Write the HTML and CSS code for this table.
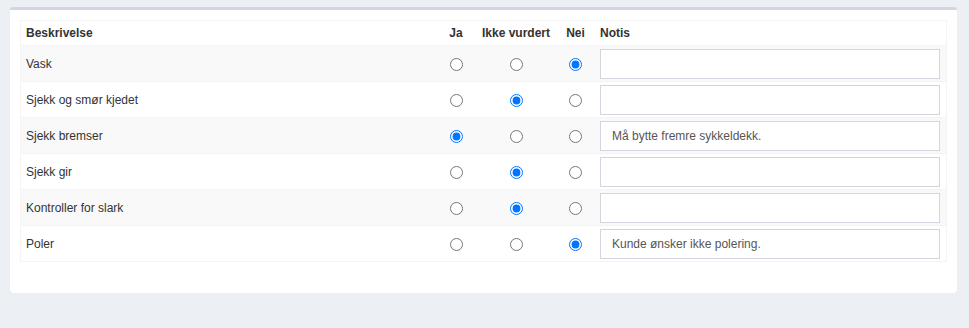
FILE: index.html
```html
<!DOCTYPE html>
<html lang="no">
<head>
  <meta charset="UTF-8">
  <meta name="viewport" content="width=device-width, initial-scale=1.0">
  <title>Sjekkliste</title>
  <link rel="stylesheet" href="styles.css">
</head>
<body>
<div class="box">
  <table class="checklist">
    <thead>
      <tr>
        <th class="col-desc">Beskrivelse</th>
        <th class="col-ja">Ja</th>
        <th class="col-ikke">Ikke vurdert</th>
        <th class="col-nei">Nei</th>
        <th class="col-notis">Notis</th>
      </tr>
    </thead>
    <tbody>
      <tr>
        <td>Vask</td>
        <td class="radio"><input type="radio" name="r1"></td>
        <td class="radio"><input type="radio" name="r1"></td>
        <td class="radio"><input type="radio" name="r1" checked></td>
        <td><input type="text" class="note" value=""></td>
      </tr>
      <tr>
        <td>Sjekk og smør kjedet</td>
        <td class="radio"><input type="radio" name="r2"></td>
        <td class="radio"><input type="radio" name="r2" checked></td>
        <td class="radio"><input type="radio" name="r2"></td>
        <td><input type="text" class="note" value=""></td>
      </tr>
      <tr>
        <td>Sjekk bremser</td>
        <td class="radio"><input type="radio" name="r3" checked></td>
        <td class="radio"><input type="radio" name="r3"></td>
        <td class="radio"><input type="radio" name="r3"></td>
        <td><input type="text" class="note" value="Må bytte fremre sykkeldekk."></td>
      </tr>
      <tr>
        <td>Sjekk gir</td>
        <td class="radio"><input type="radio" name="r4"></td>
        <td class="radio"><input type="radio" name="r4" checked></td>
        <td class="radio"><input type="radio" name="r4"></td>
        <td><input type="text" class="note" value=""></td>
      </tr>
      <tr>
        <td>Kontroller for slark</td>
        <td class="radio"><input type="radio" name="r5"></td>
        <td class="radio"><input type="radio" name="r5" checked></td>
        <td class="radio"><input type="radio" name="r5"></td>
        <td><input type="text" class="note" value=""></td>
      </tr>
      <tr>
        <td>Poler</td>
        <td class="radio"><input type="radio" name="r6"></td>
        <td class="radio"><input type="radio" name="r6"></td>
        <td class="radio"><input type="radio" name="r6" checked></td>
        <td><input type="text" class="note" value="Kunde ønsker ikke polering."></td>
      </tr>
    </tbody>
  </table>
</div>
</body>
</html>
```

FILE: styles.css
```css
body {
  font-family: "Liberation Sans", Arial, sans-serif;
  font-size: 12px;
  color: #333;
  background: #ecf0f5;
  margin: 0;
  padding: 7px 12px 0 10px;
}
.box {
  background: white;
  border-top: 3px solid #d2d6de;
  border-radius: 3px;
  box-shadow: 0 1px 1px rgba(0, 0, 0, 0.1);
  padding: 10px 10px 31px 10px;
}
.checklist {
  width: 100%;
  border-collapse: collapse;
  border: 1px solid #f4f4f4;
  table-layout: fixed;
}
.checklist th {
  font-weight: bold;
  text-align: left;
  height: 24px;
  padding: 0 5px;
  vertical-align: middle;
}
.checklist th.col-ja, .checklist th.col-ikke, .checklist th.col-nei {
  text-align: center;
  padding: 0;
}
/* notis column: 352px incl. padding */
.col-ja { width: 40px; }
.col-ikke { width: 80px; }
.col-nei { width: 39px; }
.col-notis { width: 341px; }
.checklist td {
  border-top: 1px solid #f4f4f4;
  height: 35px;
  padding: 0 6px 0 5px;
  vertical-align: middle;
}
.checklist tbody tr:nth-child(odd) {
  background: #f9f9f9;
}
.checklist td.radio {
  text-align: center;
  padding: 0;
}
.checklist td.radio input {
  margin: 0;
  width: 13px;
  height: 13px;
  vertical-align: middle;
}
.note {
  display: block;
  box-sizing: border-box;
  width: 100%;
  height: 30px;
  border: 1px solid #d2d6de;
  border-radius: 0;
  padding: 0 11px;
  font-family: "Liberation Sans", Arial, sans-serif;
  font-size: 12px;
  color: #555;
  background: white;
}
```
